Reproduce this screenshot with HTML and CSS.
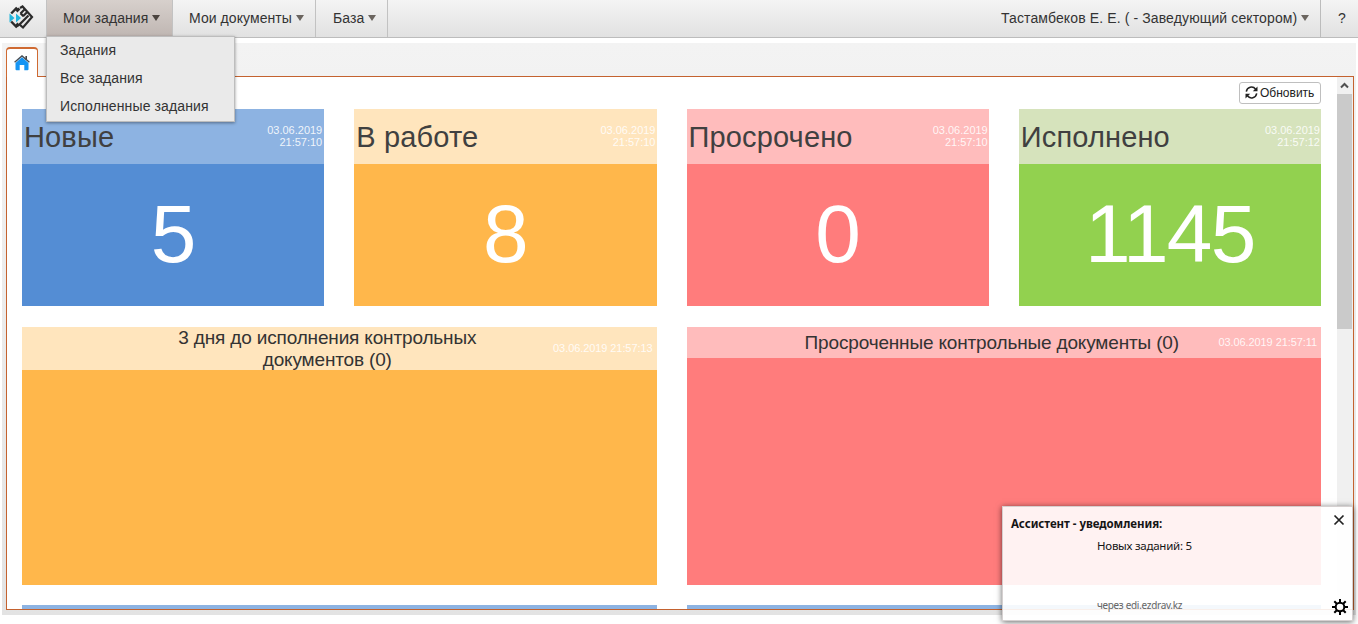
FILE: index.html
```html
<!DOCTYPE html>
<html lang="ru">
<head>
<meta charset="utf-8">
<title>Задания</title>
<link rel="stylesheet" href="styles.css">
</head>
<body>
<header class="topbar">
  <div class="logo">
    <svg width="26" height="26" viewBox="0 0 26 26" fill="none">
      <path d="M3.200 9.500 9 3.500M3.200 17.500 9 23.500M8.500 7.500 11.500 4.500M8.500 19.500 11 22" stroke="#2b2b2b" stroke-width="2.500"/>
      <path d="M12 4 14.500 2.500 24 13 15 23.500 11.500 20.500 20.500 11.500M12.500 9.500l4.500-4.500M15 12.200l4-4M12.500 9.200l3 3" stroke="#2b2b2b" stroke-width="2.200"/>
      <path d="M1.500 9.500v9l5-4.500zM8 9.500v9l5-4.500z" fill="#22b5dc"/>
    </svg>
  </div>
  <nav class="nav">
    <a class="nav-item active">Мои задания<i class="caret"></i></a>
    <a class="nav-item docs">Мои документы<i class="caret"></i></a>
    <a class="nav-item base">База<i class="caret"></i></a>
  </nav>
  <div class="user">Тастамбеков Е. Е. ( - Заведующий сектором)<i class="caret"></i></div>
  <div class="help">?</div>
</header>
<ul class="menu">
  <li>Задания</li>
  <li>Все задания</li>
  <li>Исполненные задания</li>
</ul>
<div class="workspace">
  <div class="tabs">
    <div class="tab">
      <svg width="16" height="17" viewBox="0 0 16 17">
        <path d="M1.500 8 8 2.300 14.500 8v6.300q0 1-1 1H10.300V10H5.700v5.300H2.500q-1 0-1-1z" fill="#1595f4"/>
        <path d="M12.200 1v4" stroke="#444" stroke-width="1.600"/>
        <path d="M.6 7.200 8 .9 15.400 7.200" fill="none" stroke="#474f57" stroke-width="1.400"/>
      </svg>
    </div>
  </div>
  <div class="panel">
    <main class="content">
      <div class="tools">
        <button class="refresh">
          <svg width="13" height="13" viewBox="0 0 13 13" fill="none" stroke="#222" stroke-width="1.500">
            <path d="M1.300 5.600A5.200 5.200 0 0 1 10.600 3.200M11.700 7.400A5.200 5.200 0 0 1 2.400 9.800"/>
            <path d="M12.500.5v4.800H7.800zM.5 12.500V7.700h4.700z" fill="#222" stroke="none"/>
          </svg>
          <span>Обновить</span>
        </button>
      </div>
      <div class="cards">
        <section class="card blue"><header><h2>Новые</h2><time>03.06.2019 21:57:10</time></header><div class="count">5</div></section>
        <section class="card orange"><header><h2>В работе</h2><time>03.06.2019 21:57:10</time></header><div class="count">8</div></section>
        <section class="card red"><header><h2>Просрочено</h2><time>03.06.2019 21:57:10</time></header><div class="count">0</div></section>
        <section class="card green"><header><h2>Исполнено</h2><time>03.06.2019 21:57:12</time></header><div class="count">1145</div></section>
      </div>
      <div class="wides">
        <section class="wide orange"><header><h3>3 дня до исполнения контрольных документов (0)</h3><time>03.06.2019 21:57:13</time></header></section>
        <section class="wide red"><header><h3>Просроченные контрольные документы (0)</h3><time>03.06.2019 21:57:11</time></header></section>
      </div>
      <div class="wides next">
        <section class="wide blue"><header></header></section>
        <section class="wide blue"><header></header></section>
      </div>
    </main>
    <div class="scroll">
      <div class="scroll-up"><svg width="9" height="7" viewBox="0 0 9 7"><path d="M1 5.500 4.500 2 8 5.500" fill="none" stroke="#505050" stroke-width="2"/></svg></div>
      <div class="thumb"></div>
    </div>
  </div>
</div>
<aside class="toast">
  <div class="toast-text">
    <strong>Ассистент - уведомления:</strong>
    <p>Новых заданий: 5</p>
    <small>через edi.ezdrav.kz</small>
  </div>
  <div class="toast-actions">
    <svg width="12" height="12" viewBox="0 0 12 12"><path d="M1.500 1.500l9 9M10.500 1.500l-9 9" stroke="#222" stroke-width="1.700"/></svg>
    <svg width="16" height="16" viewBox="0 0 16 16" fill="none" stroke="#000">
      <circle cx="8" cy="8" r="4.300" stroke-width="2"/>
      <path d="M8 0v3.500M8 12.500V16M0 8h3.500M12.500 8H16M2.300 2.300l2.500 2.500M11.200 11.200l2.500 2.500M2.300 13.700l2.500-2.500M11.200 4.800l2.500-2.500" stroke-width="2"/>
    </svg>
  </div>
</aside>
</body>
</html>
```
FILE: styles.css
```css
* { box-sizing: border-box; }
body {
  margin: 0;
  width: 1358px;
  height: 624px;
  overflow: hidden;
  position: relative;
  background: #fff;
  color: #333;
  font-family: "Liberation Sans", Arial, sans-serif;
}
h2, h3, p, ul { margin: 0; padding: 0; font-weight: normal; }

.topbar {
  display: flex;
  height: 38px;
  background: linear-gradient(#f4f4f4, #e1e1e1);
  border-bottom: 1px solid #bcbcbc;
  font-size: 14px;
  line-height: 36px;
}
.logo { width: 46px; padding: 4px 0 0 8px; line-height: 0; }
.nav { display: flex; flex: 1; }
.nav-item { width: 127px; padding-left: 17px; white-space: nowrap; letter-spacing: .07px; }
.nav-item.active { background: linear-gradient(#d7d0cc, #bfb6b2); border-left: 1px solid #c2c2c2; border-right: 1px solid #c2c2c2; padding-left: 16px; }
.nav-item.docs { width: 143px; padding-left: 16px; border-right: 1px solid #c2c2c2; }
.nav-item.base { width: 72px; border-right: 1px solid #c2c2c2; }
.caret {
  display: inline-block;
  margin-left: 4px;
  border: 3.5px solid transparent;
  border-width: 6px 4px 0;
  border-top-color: #6b655f;
  vertical-align: 2px;
}
.active .caret { border-top-color: #4b443f; }
.user { width: 319px; white-space: nowrap; letter-spacing: .12px; }
.help { width: 38px; border-left: 1px solid #bcbcbc; padding-left: 17px; }

.menu {
  position: absolute;
  z-index: 2;
  left: 46px;
  top: 36px;
  width: 189px;
  height: 86px;
  list-style: none;
  background: #eaeaea;
  border: 1px solid #bdbdbd;
  box-shadow: 0 1px 3px rgba(0, 0, 0, .4);
  font-size: 14px;
  line-height: 28px;
  letter-spacing: .13px;
  padding-left: 13px;
}
.menu li { height: 28px; line-height: 26px; }

.workspace { margin: 5px 2px 0; height: 572px; padding: 0 2px 5px 4px; background: linear-gradient(#f3f3f3, #e3e3e3); }
.tabs { height: 33px; padding-top: 4px; }
.tab {
  position: relative;
  z-index: 1;
  width: 32px;
  height: 30px;
  padding: 6px 0 0 7px;
  background: #fff;
  border: 1px solid #cf6a32;
  border-top-width: 2px;
  border-bottom: 0;
  border-radius: 4px 4px 0 0;
  line-height: 0;
}
.panel { display: flex; height: 534px; background: #fff; border: 1px solid #c4622f; }
.content { flex: 1; padding: 0 16px 0 15px; overflow: hidden; }
.tools { display: flex; justify-content: flex-end; height: 32px; padding-top: 5px; }
.refresh {
  display: flex;
  align-items: center;
  gap: 2px;
  width: 82px;
  height: 22px;
  padding: 0 0 1px 5px;
  background: #fff;
  border: 1px solid #bfbfbf;
  border-radius: 3px;
  color: #222;
  font: 12px "Liberation Sans", Arial, sans-serif;
}
.cards { display: grid; grid-template-columns: repeat(4, 1fr); gap: 30px; height: 197px; }
.card header { display: flex; align-items: center; justify-content: space-between; height: 55px; padding: 0 1px 0 2px; }
.card h2 { padding-top: 2px; font-size: 29px; line-height: 53px; letter-spacing: .15px; color: #404040; }
time { font-size: 11px; line-height: 12px; color: rgba(255, 255, 255, .88); text-align: right; }
.card time { width: 60px; padding-bottom: 2px; }
.card.blue time { padding-right: 1px; }
.count { height: 142px; color: #fff; font-size: 82px; line-height: 140px; letter-spacing: -1px; text-align: center; }
.green .count { letter-spacing: -1.7px; }
.wides { display: grid; grid-template-columns: 1fr 1fr; gap: 30px; height: 258px; margin-top: 21px; }
.wides.next { margin-top: 20px; }
.wide header { display: flex; align-items: center; padding-right: 4px; min-height: 31px; }
.wide h3 { flex: 1; padding: 0 71px 0 151px; color: #333; font-size: 19px; line-height: 21.5px; letter-spacing: -.16px; text-align: center; }
.wide.red h3 { padding: 0 0 0 80px; }
.wide time { width: 100px; white-space: nowrap; letter-spacing: -.08px; padding-bottom: 1px; }

.blue { background: #548dd4; }
.blue header { background: #8db3e2; }
.orange { background: #ffb74b; }
.orange header { background: #ffe5bd; }
.red { background: #ff7c7c; }
.red header { background: #ffbcbc; }
.green { background: #92d14f; }
.green header { background: #d6e3bc; }

.scroll { width: 16px; background: #f0f0f0; }
.scroll-up { display: flex; align-items: center; justify-content: center; width: 15px; height: 17px; }
.thumb { width: 15px; height: 235px; background: #cacaca; }

.toast {
  position: absolute;
  z-index: 3;
  left: 1002px;
  top: 506px;
  width: 351px;
  height: 115px;
  display: flex;
  justify-content: space-between;
  background: rgba(255, 255, 255, .9);
  border: 1px solid #d5d0d0;
  box-shadow: 0 1px 6px rgba(0, 0, 0, .6);
  color: #151515;
  font-family: "Noto Sans", "Open Sans", sans-serif;
}
.toast-text { display: flex; flex-direction: column; padding: 8px 0 0 8px; }
.toast strong { font-size: 11.5px; line-height: 18px; letter-spacing: -.05px; }
.toast p { padding-left: 86px; margin-top: 4px; font-size: 11.5px; line-height: 18px; letter-spacing: -.25px; }
.toast small { padding-left: 86px; margin-top: 42px; font-size: 10px; line-height: 16px; letter-spacing: -.3px; color: #666; }
.toast-actions { display: flex; flex-direction: column; align-items: flex-end; justify-content: space-between; padding: 7px 4px 5px 0; }
.toast-actions svg:first-child { margin-right: 3px; }
```
